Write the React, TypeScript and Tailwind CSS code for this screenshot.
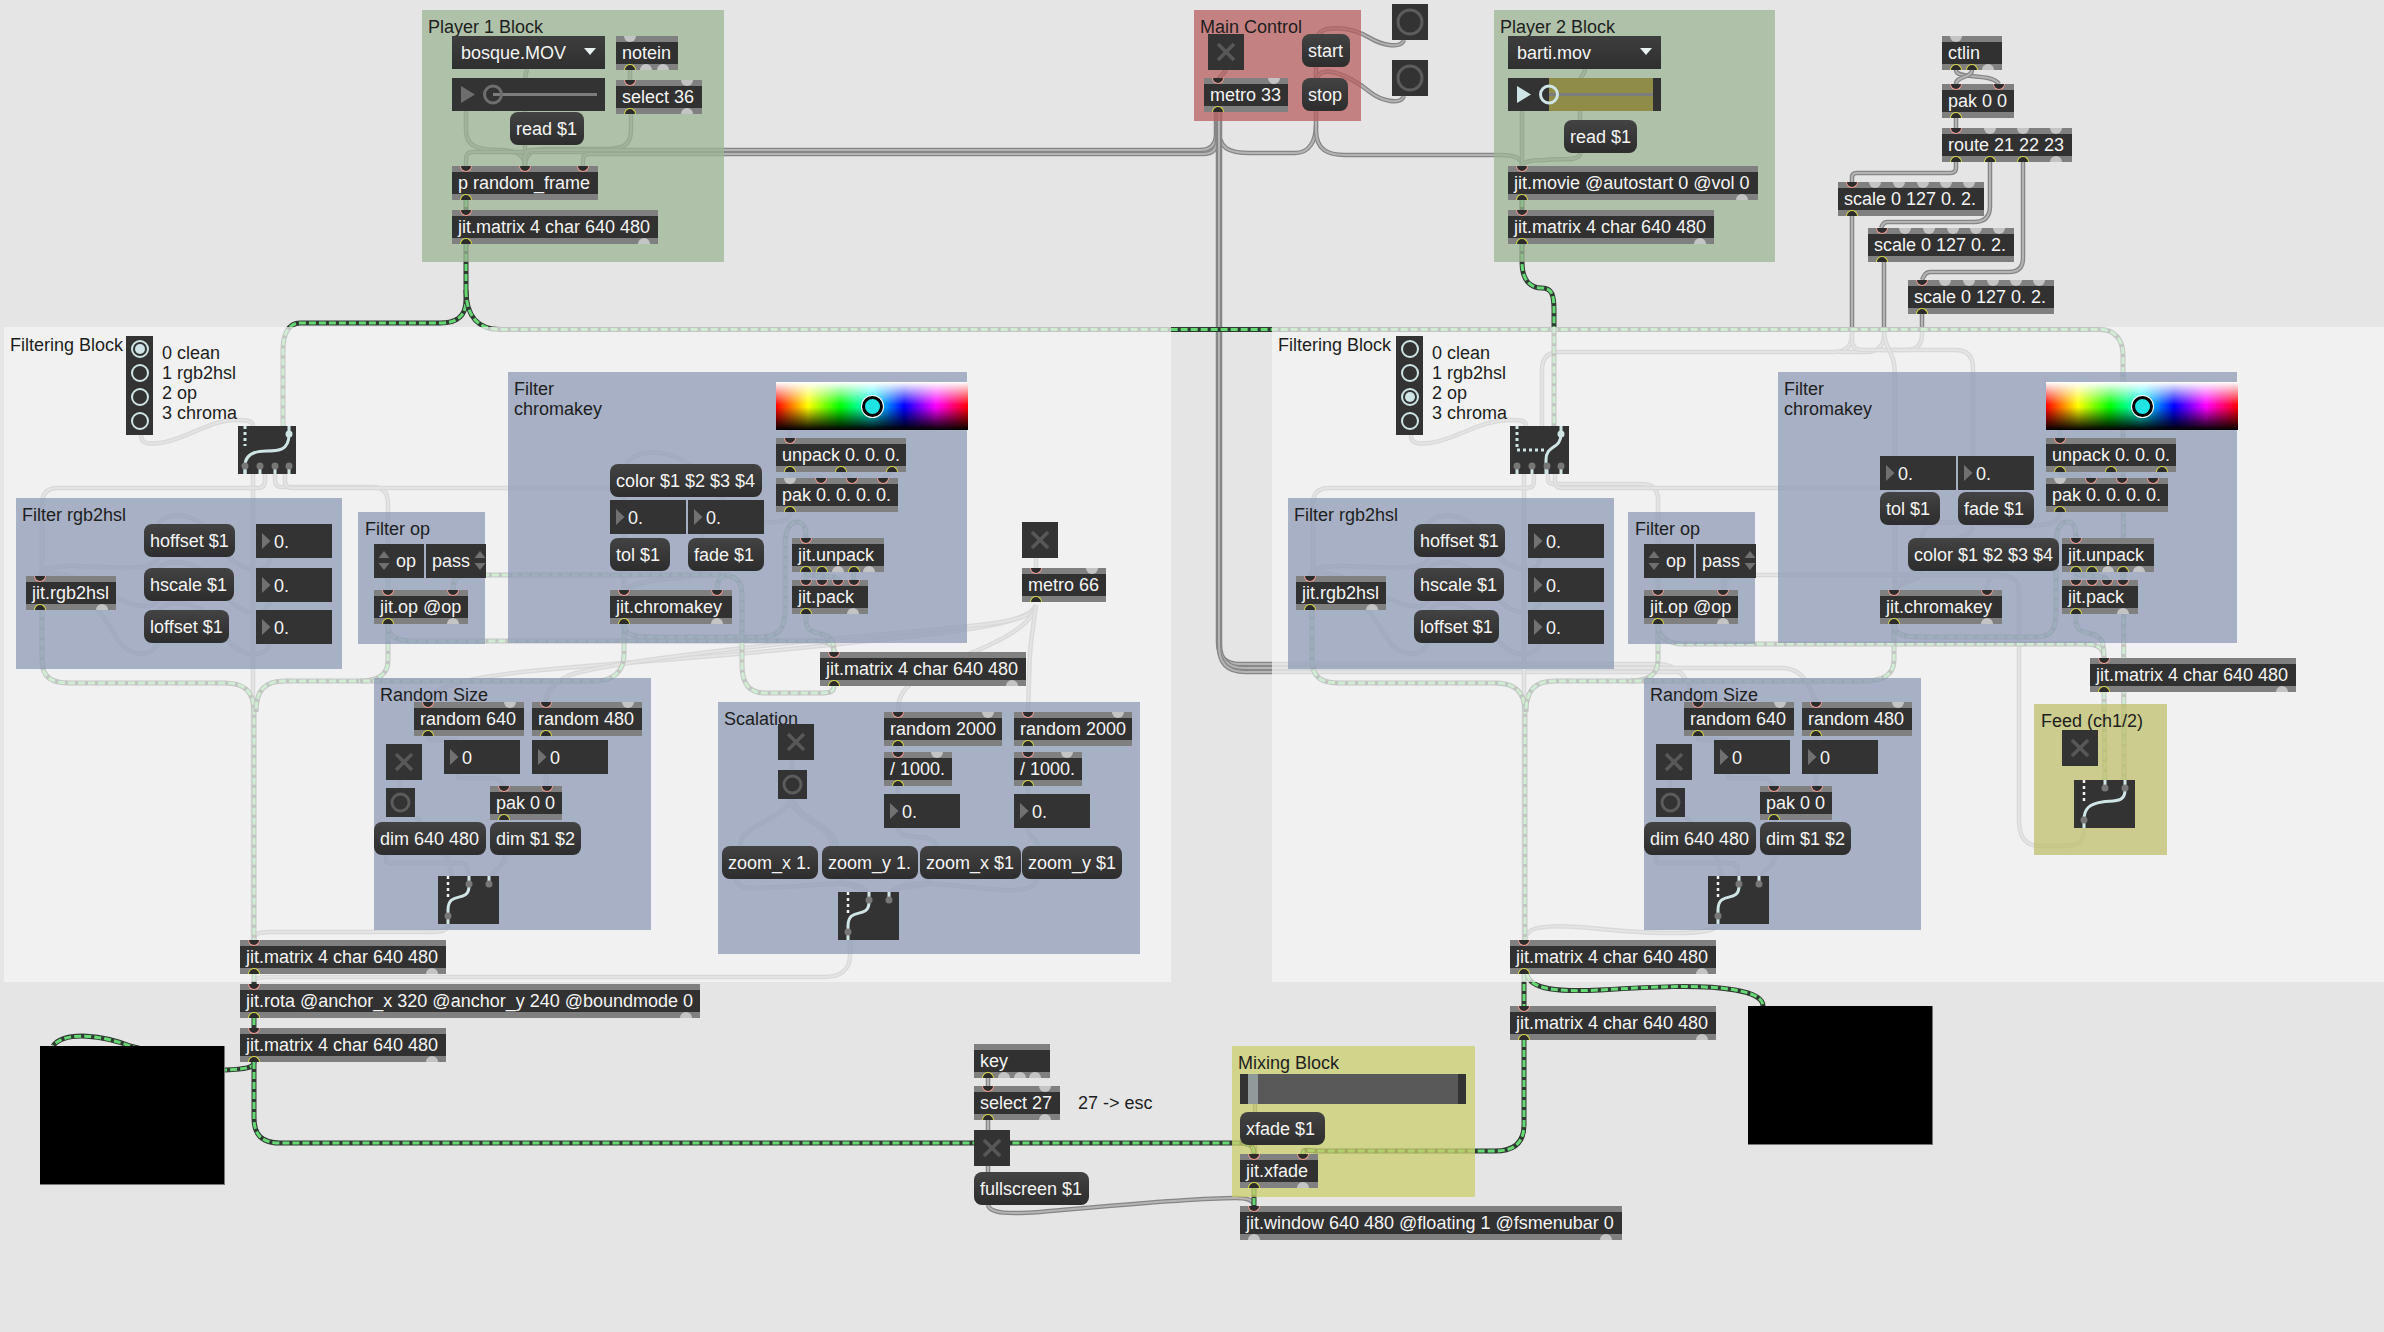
import React from "react";

type Pt = [number, number];
const P = (pts: Pt[], r = 14): string => {
  let d = `M${pts[0][0]} ${pts[0][1]}`;
  for (let i = 1; i < pts.length - 1; i++) {
    const [ax, ay] = pts[i - 1];
    const [bx, by] = pts[i];
    const [cx, cy] = pts[i + 1];
    const d1 = Math.hypot(bx - ax, by - ay) || 1;
    const d2 = Math.hypot(cx - bx, cy - by) || 1;
    const q = Math.min(r, d1 / 2, d2 / 2);
    d += ` L${bx - ((bx - ax) / d1) * q} ${by - ((by - ay) / d1) * q} Q${bx} ${by} ${bx + ((cx - bx) / d2) * q} ${by + ((cy - by) / d2) * q}`;
  }
  const l = pts[pts.length - 1];
  return d + ` L${l[0]} ${l[1]}`;
};

/* wires that exist identically in both Filtering Blocks (right one is +1270) */
const sharedGray: string[] = [
  "M270 558 C270 578 232 572 215 540 C203 515 170 508 158 524",
  "M158 557 C158 574 100 566 72 566 C50 566 40 570 40 576",
  "M270 602 C262 622 235 612 222 590 C205 565 175 555 158 568",
  "M158 601 C150 612 130 604 112 596 C85 582 55 566 40 576",
  "M270 644 C262 662 235 655 225 635 C210 605 175 595 158 610",
  "M158 643 C150 660 128 655 118 640 C105 620 90 585 40 576",
  P([[428, 736], [428, 740], [458, 740]], 3),
  P([[458, 774], [458, 778], [498, 778], [504, 786]], 6),
  P([[546, 736], [546, 786]]),
  P([[400, 780], [400, 788]]),
  "M416 817 C430 835 452 850 452 885",
  P([[504, 820], [504, 822]]),
  P([[386, 855], [386, 863], [468, 863], [468, 885]], 8),
  "M505 855 C505 870 489 868 489 885",
  P([[388, 578], [388, 590]]),
  P([[453, 578], [453, 590]]),
];

const gray: string[] = [
  // Player 1
  P([[630, 70], [630, 80]]),
  P([[527, 69], [525, 78], [525, 166]], 4),
  "M631 114 L631 130 C631 146 622 149 605 149 L545 149 C532 149 525 154 525 166",
  "M466 111 L466 130 C466 148 480 150 500 150 C515 150 525 155 525 166",
  P([[1218, 112], [1218, 152], [480, 152], [466, 152], [466, 166]], 16),
  P([[1216, 112], [1216, 150], [540, 150], [525, 150], [525, 166]], 16),
  P([[1217, 112], [1217, 154], [595, 154], [583, 154], [583, 166]], 14),
  // Main control
  P([[1226, 70], [1218, 80]], 2),
  "M1218 125 C1218 150 1230 153 1250 153 L1295 153 C1310 153 1316 140 1316 125",
  P([[1316, 67], [1316, 78]]),
  "M1316 111 L1316 130 C1316 150 1328 155 1345 155 L1500 155 C1515 155 1522 158 1522 166",
  "M1404 40 C1400 50 1380 44 1370 38 C1350 26 1320 24 1317 38",
  "M1404 96 C1400 106 1380 100 1370 92 C1350 76 1320 62 1317 80",
  P([[1218, 112], [1218, 664], [1678, 664], [1698, 702]], 22),
  P([[1220, 112], [1220, 668], [1800, 668], [1816, 702]], 24),
  P([[1219, 112], [1219, 672], [1680, 672]], 26),
  // Player 2
  P([[1522, 111], [1522, 166]]),
  "M1585 69 C1585 76 1580 74 1580 82 L1580 120",
  "M1580 153 C1580 162 1560 158 1545 160 C1530 160 1522 162 1522 166",
  // ctlin
  "M1956 70 C1956 80 1990 72 1999 84",
  "M1972 70 C1972 78 1956 76 1956 84",
  P([[1956, 118], [1956, 128]]),
  P([[1956, 162], [1956, 173], [1852, 173], [1852, 182]], 8),
  P([[1990, 162], [1990, 222], [1884, 222], [1881, 228]], 16),
  P([[2023, 162], [2023, 272], [1926, 272], [1922, 280]], 14),
  // scale outlets into right block
  P([[1852, 216], [1852, 352], [1542, 352], [1542, 426]], 18),
  P([[1884, 262], [1884, 352], [1840, 352]], 18),
  P([[1922, 314], [1922, 350], [1880, 350]], 16),
  P([[1852, 330], [1852, 350], [1973, 350], [1973, 492]], 18),
  "M1884 330 C1884 350 1895 350 1895 375 L1895 456",
  // Left filtering
  "M141 435 C141 445 150 444 160 443 C185 440 210 420 235 420 C245 420 253 420 253 426",
  P([[253, 474], [253, 940]]),
  P([[265, 474], [265, 488], [42, 488], [42, 576]], 16),
  P([[275, 474], [275, 487], [388, 487], [388, 590]], 16),
  P([[285, 474], [285, 488], [624, 488], [624, 590]], 10),
  P([[624, 497], [624, 500]]),
  P([[624, 571], [624, 590]]),
  P([[702, 534], [702, 538]]),
  "M702 571 C700 582 650 574 624 590",
  "M790 512 C790 524 775 522 765 522 C745 520 725 505 700 475 C680 450 640 445 626 464",
  P([[790, 430], [790, 438]]),
  "M790 472 C790 478 821 472 821 478",
  P([[841, 472], [852, 478]], 2),
  P([[892, 472], [883, 478]], 2),
  P([[1036, 558], [1036, 568]]),
  "M1036 605 C1030 625 960 632 800 648 C650 663 520 668 470 680 C440 688 428 692 428 702",
  "M1036 605 C1030 625 980 625 800 642 C700 652 600 665 570 675 C555 682 546 690 546 702",
  "M1036 605 C1030 640 940 660 915 680 C900 692 898 700 898 712",
  P([[1036, 605], [1030, 650], [1028, 712]], 10),
  // Scalation
  P([[792, 760], [792, 770]]),
  "M792 799 C780 822 740 825 740 846",
  "M792 799 C800 820 835 825 837 846",
  "M790 799 C795 820 828 822 832 846",
  P([[898, 746], [898, 752]]),
  P([[898, 786], [898, 794]]),
  "M898 828 C898 842 936 832 936 846",
  P([[1028, 746], [1028, 752]]),
  P([[1028, 786], [1028, 794]]),
  "M1028 828 C1028 838 1038 838 1038 846",
  "M736 879 C736 892 760 888 800 886 C835 884 869 878 869 900",
  "M840 879 C845 888 869 885 869 900",
  "M930 879 C930 892 889 880 889 900",
  "M1036 879 C1036 895 1000 890 960 886 C925 882 889 880 889 900",
  "M448 924 C448 932 440 932 425 932 L270 932 C258 932 254 934 254 940",
  "M850 940 L850 955 C850 970 840 977 825 977 L270 977 C258 977 254 978 254 984",
  // Right filtering
  "M1411 435 C1411 445 1420 444 1430 443 C1455 440 1480 420 1510 420 C1520 420 1526 420 1526 426",
  P([[1524, 474], [1524, 940]]),
  P([[1534, 474], [1534, 488], [1313, 488], [1313, 576]], 16),
  P([[1548, 474], [1548, 484], [1658, 484], [1658, 590]], 16),
  P([[1555, 474], [1555, 488], [1895, 488], [1895, 590]], 10),
  P([[1973, 490], [1973, 492]]),
  "M2060 512 C2060 524 2045 526 2020 526 L1945 522 C1928 522 1922 530 1922 538",
  "M1922 571 C1922 582 1900 580 1895 590",
  "M1973 525 C1973 542 1940 535 1925 555 C1915 575 1900 578 1895 590",
  P([[2060, 430], [2060, 438]]),
  "M2060 472 C2060 478 2090 472 2090 478",
  P([[2110, 472], [2121, 478]], 2),
  P([[2162, 472], [2153, 478]], 2),
  "M2084 828 C2084 846 2075 846 2060 846 L2040 846 C2026 846 2019 838 2019 820 L2019 592 C2019 580 2012 575 1998 575 L1740 575 C1728 575 1724 578 1724 590",
  "M1987 590 C1987 578 1992 575 2000 575",
  "M1527 935 C1530 925 1560 925 1590 928 C1640 933 1690 935 1710 930 C1716 928 1718 926 1718 924",
  // Bottom
  P([[988, 1078], [988, 1086]]),
  P([[988, 1120], [988, 1130]]),
  P([[988, 1166], [988, 1172]]),
  P([[1255, 1104], [1255, 1112]]),
  P([[1255, 1145], [1255, 1154]]),
  "M988 1205 C990 1214 1010 1214 1040 1212 C1110 1206 1190 1198 1235 1198 C1248 1198 1254 1200 1254 1206",
];

const jit: string[] = [
  P([[466, 200], [466, 210]]),
  "M466 244 L466 300 C466 318 455 323 440 323 L300 323 C288 323 283 335 283 350 L283 426",
  "M466 290 C466 318 480 329.5 500 329.5 L2100 329.5 C2115 329.5 2123 340 2123 355 L2124 790",
  "M42 610 L42 660 C42 678 52 683 70 683 L225 683 C245 683 254 692 254 712 L254 940",
  "M388 624 L388 660 C388 675 378 681 360 681 L285 681 C265 681 256 690 256 712",
  "M624 624 L624 655 C624 672 612 681 595 681 L360 681",
  "M388 624 C388 638 398 641 415 641 L815 641 C830 641 834 645 834 652",
  "M834 686 C834 692 830 693 820 693 L765 693 C750 693 742 685 742 665 L742 595 C742 580 735 575 720 575 L470 575 C458 575 453 578 453 590",
  "M717 590 C717 578 722 575 730 575",
  "M624 624 C624 634 632 637 650 637 L760 637 C778 637 785 630 785 610 L785 545 C785 530 790 522 797 522 C804 522 806 528 806 538",
  "M806 614 L806 620 C806 632 815 632 822 634 C832 637 834 642 834 652",
  P([[806, 572], [806, 580]]),
  P([[822, 572], [822, 580]]),
  P([[854, 572], [854, 580]]),
  "M806 572 C806 578 838 574 838 580",
  P([[254, 974], [254, 984]]),
  P([[254, 1018], [254, 1028]]),
  "M254 1062 C254 1068 245 1069 225 1070 L130 1046 C105 1036 65 1030 53 1046",
  "M254 1062 L254 1118 C254 1135 262 1143 280 1143 L1238 1143 C1250 1143 1254 1146 1254 1154",
  // Right
  P([[1522, 200], [1522, 210]]),
  "M1522 244 L1522 262 C1522 282 1532 288 1542 288 C1552 288 1554 295 1554 310 L1554 426",
  "M1312 610 L1312 660 C1312 678 1322 683 1340 683 L1495 683 C1515 683 1525 692 1525 712 L1525 940",
  "M1658 624 L1658 660 C1658 675 1648 681 1630 681 L1555 681 C1535 681 1526 690 1526 712",
  "M1894 624 L1894 660 C1894 675 1882 681 1865 681 L1630 681",
  "M1658 624 C1658 638 1668 644 1685 644 L2085 644 C2100 644 2104 650 2104 658",
  "M1894 624 C1894 634 1902 637 1920 637 L2035 637 C2052 637 2056 630 2056 610 L2056 545 C2056 530 2060 522 2067 522 C2074 522 2076 528 2076 538",
  "M2076 614 L2076 620 C2076 632 2085 632 2092 634 C2102 637 2104 642 2104 658",
  P([[2076, 572], [2076, 580]]),
  P([[2092, 572], [2092, 580]]),
  P([[2123, 572], [2123, 580]]),
  "M2076 572 C2076 578 2107 574 2107 580",
  P([[2104, 692], [2105, 790]]),
  P([[1524, 974], [1524, 1006]]),
  "M1527 974 C1530 990 1560 992 1600 990 C1650 987 1700 984 1735 990 C1758 994 1763 1000 1763 1006",
  "M1524 1040 L1524 1125 C1524 1142 1515 1151 1495 1151 L1320 1151 C1306 1151 1303 1148 1303 1154",
  P([[1254, 1188], [1254, 1206]]),
];

const GrayWire = ({ d }: { d: string }) => (
  <>
    <path d={d} fill="none" stroke="#868686" strokeWidth="4.5" />
    <path d={d} fill="none" stroke="#b4b4b4" strokeWidth="2" />
  </>
);
const JitWire = ({ d }: { d: string }) => (
  <>
    <path d={d} fill="none" stroke="#303a32" strokeWidth="5" />
    <path d={d} fill="none" stroke="#66d874" strokeWidth="3" strokeDasharray="7 3" />
  </>
);

const Wires = () => (
  <svg className="absolute left-0 top-0" width="2384" height="1332">
    <g>{sharedGray.map((d, i) => <GrayWire key={i} d={d} />)}</g>
    <g transform="translate(1270 0)">{sharedGray.map((d, i) => <GrayWire key={i} d={d} />)}</g>
    {gray.map((d, i) => <GrayWire key={i} d={d} />)}
    {jit.map((d, i) => <JitWire key={i} d={d} />)}
  </svg>
);

type Box = { x: number; y: number; w: number; h: number };
const box = (b: Box): React.CSSProperties => ({ left: b.x, top: b.y, width: b.w, height: b.h });

const Region = ({ c, ...b }: Box & { c: string }) => <div className={`absolute ${c}`} style={box(b)} />;

const Label = ({ x, y, children }: { x: number; y: number; children: React.ReactNode }) => (
  <div className="absolute whitespace-pre text-[18px] leading-[20px] text-[#1e1e1e]" style={{ left: x, top: y - 10 }}>
    {children}
  </div>
);

const Port = ({ at, kind }: { at: number; kind: "a" | "b" | "c" | "d" }) => {
  const cls =
    kind === "a"
      ? "top-0 rounded-b-full bg-[#2c2c2c] border-[1.5px] border-t-0 border-[#f29c90]"
      : kind === "b"
      ? "top-0 rounded-b-full bg-[#c4c4c4]"
      : kind === "c"
      ? "bottom-0 rounded-t-full bg-[#2c2c2c] border-[1.5px] border-b-0 border-[#dcdc46]"
      : "bottom-0 rounded-t-full bg-[#c4c4c4]";
  return <div className={`absolute h-[6px] w-[12px] ${cls}`} style={{ left: at - 6 }} />;
};

type ObjP = { x: number; y: number; w: number; t?: string; a?: number[]; b?: number[]; c?: number[]; d?: number[] };
const Obj = ({ x, y, w, t, a = [], b = [], c = [], d = [] }: ObjP) => (
  <div className="absolute flex h-[34px] items-stretch bg-[#808080] py-[6px]" style={{ left: x, top: y, width: w }}>
    <div className="flex flex-1 items-center overflow-visible whitespace-pre bg-[#313131] pl-[6px] text-[18px] leading-none text-[#f4f4f4]">{t}</div>
    {a.map((o) => <Port key={"a" + o} at={o} kind="a" />)}
    {b.map((o) => <Port key={"b" + o} at={o} kind="b" />)}
    {c.map((o) => <Port key={"c" + o} at={o} kind="c" />)}
    {d.map((o) => <Port key={"d" + o} at={o} kind="d" />)}
  </div>
);

const Msg = ({ x, y, w, t }: { x: number; y: number; w: number; t: string }) => (
  <div
    className="absolute flex h-[33px] items-center whitespace-pre rounded-[8px] bg-gradient-to-b from-[#434343] to-[#2d2d2d] pl-[6px] pt-[1px] text-[18px] leading-none text-[#f4f4f4]"
    style={{ left: x, top: y, width: w }}
  >
    {t}
  </div>
);

const Num = ({ x, y, w, t }: { x: number; y: number; w: number; t: string }) => (
  <div className="absolute flex h-[34px] items-center whitespace-pre bg-[#333333] pl-[18px] pt-[1px] text-[18px] leading-none text-[#f4f4f4]" style={{ left: x, top: y, width: w }}>
    <svg className="absolute left-[6px] top-[9px]" width="9" height="16">
      <path d="M0 0 L8.5 8 L0 16 Z" fill="#717171" />
    </svg>
    {t}
  </div>
);

const Toggle = ({ x, y, w = 36 }: { x: number; y: number; w?: number }) => (
  <div className="absolute flex h-[36px] items-center justify-center bg-[#333333]" style={{ left: x, top: y, width: w }}>
    <svg width="20" height="20">
      <path d="M2 2 L18 18 M18 2 L2 18" stroke="#585858" strokeWidth="3.5" />
    </svg>
  </div>
);

const Btn = ({ x, y, s }: { x: number; y: number; s: number }) => (
  <div className="absolute flex items-center justify-center bg-[#333333]" style={{ left: x, top: y, width: s, height: s === 36 ? 36 : 29 }}>
    <svg width={s - 6} height={s - 6}>
      <circle cx={(s - 6) / 2} cy={(s - 6) / 2} r={(s - 6) / 2 - 3} fill="none" stroke="#5c5c5c" strokeWidth="3" />
    </svg>
  </div>
);

const Menu = ({ x, y, w, t }: { x: number; y: number; w: number; t: string }) => (
  <div className="absolute flex h-[33px] items-center whitespace-pre bg-gradient-to-b from-[#3e3e3e] to-[#2f2f2f] pl-[9px] text-[18px] leading-none text-[#f4f4f4]" style={{ left: x, top: y, width: w }}>
    {t}
    <svg className="absolute right-[8px] top-[12px]" width="14" height="8">
      <path d="M1 0 L13 0 L7 7 Z" fill="#e8f0f0" />
    </svg>
  </div>
);

const Radio = ({ x, sel }: { x: number; sel: number }) => (
  <div className="absolute" style={{ left: x, top: 336 }}>
    <div className="relative flex h-[99px] w-[27px] flex-col items-center gap-[6px] bg-[#333333] pt-[4px]">
      {[0, 1, 2, 3].map((i) => (
        <div key={i} className="flex h-[18px] w-[18px] items-center justify-center rounded-full border-2 border-[#cfe5e5]">
          {i === sel && <div className="h-[10px] w-[10px] rounded-full bg-[#cfe5e5]" />}
        </div>
      ))}
    </div>
  </div>
);

const Legend = ({ x }: { x: number }) => (
  <div className="absolute text-[18px] leading-[20px] text-[#1e1e1e]" style={{ left: x, top: 343 }}>
    <div>0 clean</div>
    <div>1 rgb2hsl</div>
    <div>2 op</div>
    <div>3 chroma</div>
  </div>
);

const Spin = ({ x, w, t, right }: { x: number; w: number; t: string; right?: boolean }) => (
  <div className={`absolute flex h-[34px] items-center bg-[#333333] text-[18px] leading-none text-[#f4f4f4] ${right ? "pl-[6px]" : "pl-[22px]"}`} style={{ left: x, top: 544, width: w }}>
    {t}
    <svg className={`absolute top-[6px] ${right ? "right-[0px]" : "left-[4px]"}`} width="12" height="22">
      <path d="M6 1 L11.5 8 L0.5 8 Z M0.5 13 L11.5 13 L6 20 Z" fill="#707070" />
    </svg>
  </div>
);

const Swatch = ({ x }: { x: number }) => {
  return (
    <div className="absolute h-[48px] w-[192px] bg-[linear-gradient(to_right,#ff0000,#ffff00,#00ff00,#00ffff,#0000ff,#ff00ff,#ff0000)]" style={{ left: x, top: 382 }}>
      <div className="absolute inset-0 bg-[linear-gradient(to_bottom,#ffffff,rgba(255,255,255,0)_48%,rgba(0,0,0,0)_52%,#000000)]" />
      <div className="absolute left-[86px] top-[14px] h-[21px] w-[21px] rounded-full border-[3px] border-black bg-[#1fe4e4] shadow-[0_0_0_1px_#ffffff]" />
    </div>
  );
};

const BigSwitch = ({ x, w, sel }: { x: number; w: number; sel: number }) => {
  const outs = [7, 22, 37, 51];
  return (
    <svg className="absolute bg-[#333333]" style={{ left: x, top: 426 }} width={w} height="48">
      {sel === 0 ? (
        <>
          <path d="M7 0 V20" stroke="#cfe5e5" strokeWidth="3" strokeDasharray="3 3" fill="none" />
          <path d="M51 0 V8 C51 25 40 25 28 25 C14 25 7 30 7 40 V48" stroke="#cfe5e5" strokeWidth="3" fill="none" />
        </>
      ) : (
        <>
          <path d="M7 0 V24 H37" stroke="#cfe5e5" strokeWidth="3" strokeDasharray="3 3" fill="none" />
          <path d="M51 0 V8 C51 24 36 18 36 34 V48" stroke="#cfe5e5" strokeWidth="3" fill="none" />
        </>
      )}
      {outs.map((o) => (
        <g key={o}>
          <path d={`M${o} 40 V48`} stroke="#cfe5e5" strokeWidth="3" />
          <circle cx={o} cy="40" r="3.5" fill="#777777" />
        </g>
      ))}
      <circle cx="51" cy="8" r="3.5" fill="#cfe5e5" />
    </svg>
  );
};

const Gate = ({ x, y, sel = 0 }: { x: number; y: number; sel?: number }) => {
  const from = sel === 0 ? 31 : 51;
  return (
    <svg className="absolute bg-[#333333]" style={{ left: x, top: y }} width="61" height="48">
      <path d="M10 0 V24" stroke="#f2f2f2" strokeWidth="2.5" strokeDasharray="3 3" fill="none" />
      <path d={sel === 0 ? "M31 0 V10 C31 28 10 14 10 34 V48" : "M51 0 V10 C51 24 38 20 28 22 C16 24 10 28 10 40 V48"} stroke="#cfe5e5" strokeWidth="3" fill="none" />
      <path d={sel === 0 ? "M51 0 V8" : "M31 0 V8"} stroke="#cfe5e5" strokeWidth="3" fill="none" />
      <circle cx={from} cy="8" r="3.5" fill="#777777" />
      <circle cx={sel === 0 ? 51 : 31} cy="8" r="3.5" fill="#777777" />
      <circle cx="10" cy="40" r="3.5" fill="#777777" />
    </svg>
  );
};

const Bar = ({ x, on }: { x: number; on?: boolean }) => (
  <svg className="absolute" style={{ left: x, top: 78 }} width="153" height="33">
    <rect width="153" height="33" fill="#333333" />
    {on && <rect x="41" width="104" height="33" fill="#8f8c4a" />}
    <path d="M9 8 L23 16.5 L9 25 Z" fill={on ? "#cfe5e5" : "#6e6e6e"} />
    <path d="M41 16.5 H145" stroke="#7c7c7c" strokeWidth="3" />
    <circle cx="41" cy="16.5" r="8.5" fill="none" stroke={on ? "#cfe5e5" : "#6e6e6e"} strokeWidth="3" />
  </svg>
);

/* objects that repeat at +1270 in the right-hand Filtering Block */
const Shared = ({ dx }: { dx: number }) => (
  <>
    <Obj x={26 + dx} y={576} w={90} t="jit.rgb2hsl" a={[14]} c={[14]} d={[76]} />
    <Msg x={144 + dx} y={524} w={91} t="hoffset $1" />
    <Msg x={144 + dx} y={568} w={90} t="hscale $1" />
    <Msg x={144 + dx} y={610} w={85} t="loffset $1" />
    <Num x={256 + dx + (dx ? 2 : 0)} y={524} w={76} t="0." />
    <Num x={256 + dx + (dx ? 2 : 0)} y={568} w={76} t="0." />
    <Num x={256 + dx + (dx ? 2 : 0)} y={610} w={76} t="0." />
    <Spin x={374 + dx} w={50} t="op" />
    <Spin x={426 + dx} w={60} t="pass" right />
    <Obj x={374 + dx} y={590} w={94} t="jit.op @op" a={[14, 79]} c={[14]} d={[79]} />
    <Obj x={414 + dx} y={702} w={110} t="random 640" a={[14]} b={[96]} c={[14]} />
    <Obj x={532 + dx} y={702} w={110} t="random 480" a={[14]} b={[96]} c={[14]} />
    <Toggle x={386 + dx} y={744} />
    <Num x={444 + dx} y={740} w={76} t="0" />
    <Num x={532 + dx} y={740} w={76} t="0" />
    <Btn x={386 + dx} y={788} s={29} />
    <Obj x={490 + dx} y={786} w={72} t="pak 0 0" a={[14, 57]} c={[14]} />
    <Msg x={374 + dx} y={822} w={112} t="dim 640 480" />
    <Msg x={490 + dx} y={822} w={91} t="dim $1 $2" />
    <Gate x={438 + dx} y={876} />
  </>
);

const Panels = () => (
  <>
    <Region x={4} y={327} w={1167} h={655} c="bg-[rgba(244,244,244,0.75)]" />
    <Region x={1272} y={327} w={1112} h={655} c="bg-[rgba(244,244,244,0.75)]" />
    <Region x={422} y={10} w={302} h={252} c="bg-[rgba(156,180,148,0.75)]" />
    <Region x={1194} y={10} w={167} h={111} c="bg-[rgba(184,95,95,0.75)]" />
    <Region x={1494} y={10} w={281} h={252} c="bg-[rgba(156,180,148,0.75)]" />
    <Region x={16} y={498} w={326} h={171} c="bg-[rgba(141,153,180,0.75)]" />
    <Region x={358} y={512} w={127} h={132} c="bg-[rgba(141,153,180,0.75)]" />
    <Region x={508} y={372} w={459} h={271} c="bg-[rgba(141,153,180,0.75)]" />
    <Region x={374} y={678} w={277} h={252} c="bg-[rgba(141,153,180,0.75)]" />
    <Region x={718} y={702} w={422} h={252} c="bg-[rgba(141,153,180,0.75)]" />
    <Region x={1288} y={498} w={326} h={171} c="bg-[rgba(141,153,180,0.75)]" />
    <Region x={1628} y={512} w={127} h={132} c="bg-[rgba(141,153,180,0.75)]" />
    <Region x={1778} y={372} w={459} h={271} c="bg-[rgba(141,153,180,0.75)]" />
    <Region x={1644} y={678} w={277} h={252} c="bg-[rgba(141,153,180,0.75)]" />
    <Region x={2034} y={704} w={133} h={151} c="bg-[rgba(190,191,107,0.75)]" />
    <Region x={1232} y={1046} w={243} h={151} c="bg-[rgba(201,205,108,0.75)]" />
  </>
);

const MATRIX = "jit.matrix 4 char 640 480";

export default function App() {
  return (
    <div className="relative h-[1332px] w-[2384px] overflow-hidden bg-[#e5e5e5] font-['Liberation_Sans',Arial,sans-serif]">
      <Wires />
      <Panels />

      <Label x={428} y={27}>Player 1 Block</Label>
      <Menu x={452} y={36} w={153} t="bosque.MOV" />
      <Obj x={616} y={36} w={62} t="notein" b={[14]} c={[14]} d={[30, 47]} />
      <Bar x={452} />
      <Obj x={616} y={80} w={86} t="select 36" a={[14]} b={[71]} c={[14]} d={[71]} />
      <Msg x={510} y={112} w={74} t="read $1" />
      <Obj x={452} y={166} w={146} t="p random_frame" a={[14, 73, 131]} c={[14]} />
      <Obj x={452} y={210} w={206} t={MATRIX} a={[14]} c={[14]} d={[192]} />

      <Label x={1200} y={27}>Main Control</Label>
      <Toggle x={1208} y={34} />
      <Obj x={1204} y={78} w={84} t="metro 33" a={[14]} b={[70]} c={[14]} />
      <Msg x={1302} y={34} w={48} t="start" />
      <Msg x={1302} y={78} w={46} t="stop" />
      <Btn x={1392} y={4} s={36} />
      <Btn x={1392} y={60} s={36} />

      <Label x={1500} y={27}>Player 2 Block</Label>
      <Menu x={1508} y={36} w={153} t="barti.mov" />
      <Bar x={1508} on />
      <Msg x={1564} y={120} w={73} t="read $1" />
      <Obj x={1508} y={166} w={250} t="jit.movie @autostart 0 @vol 0" a={[14]} c={[14]} d={[234]} />
      <Obj x={1508} y={210} w={206} t={MATRIX} a={[14]} c={[14]} d={[192]} />

      <Obj x={1942} y={36} w={60} t="ctlin" b={[14]} c={[14, 30]} d={[46]} />
      <Obj x={1942} y={84} w={72} t="pak 0 0" a={[14, 57]} c={[14]} />
      <Obj x={1942} y={128} w={130} t="route 21 22 23" a={[14]} b={[48, 81, 114]} c={[14, 48, 81]} d={[114]} />
      <Obj x={1838} y={182} w={146} t="scale 0 127 0. 2." a={[14]} b={[37, 61, 85, 108, 131]} c={[14]} />
      <Obj x={1868} y={228} w={146} t="scale 0 127 0. 2." a={[14]} b={[37, 61, 85, 108, 131]} c={[14]} />
      <Obj x={1908} y={280} w={146} t="scale 0 127 0. 2." a={[14]} b={[37, 61, 85, 108, 131]} c={[14]} />

      {/* Left filtering block */}
      <Label x={10} y={345}>Filtering Block</Label>
      <Radio x={126} sel={0} />
      <Legend x={162} />
      <BigSwitch x={238} w={58} sel={0} />
      <Label x={22} y={515}>Filter rgb2hsl</Label>
      <Label x={365} y={529}>Filter op</Label>
      <Label x={514} y={389}>Filter</Label>
      <Label x={514} y={409}>chromakey</Label>
      <Label x={380} y={695}>Random Size</Label>
      <Shared dx={0} />
      <Swatch x={776} />
      <Obj x={776} y={438} w={130} t="unpack 0. 0. 0." a={[14]} c={[14, 65, 116]} />
      <Obj x={776} y={478} w={122} t="pak 0. 0. 0. 0." b={[14]} a={[45, 76, 107]} c={[14]} />
      <Msg x={610} y={464} w={152} t="color $1 $2 $3 $4" />
      <Num x={610} y={500} w={76} t="0." />
      <Num x={688} y={500} w={76} t="0." />
      <Msg x={610} y={538} w={60} t="tol $1" />
      <Msg x={688} y={538} w={76} t="fade $1" />
      <Obj x={610} y={590} w={122} t="jit.chromakey" a={[14, 107]} c={[14]} d={[107]} />
      <Obj x={792} y={538} w={92} t="jit.unpack" a={[14]} c={[14, 30, 62]} d={[46, 77]} />
      <Obj x={792} y={580} w={76} t="jit.pack" a={[14, 30, 46, 62]} c={[14]} d={[61]} />
      <Toggle x={1022} y={522} />
      <Obj x={1022} y={568} w={84} t="metro 66" a={[14]} b={[70]} c={[14]} />
      <Obj x={820} y={652} w={206} t={MATRIX} a={[14]} c={[14]} d={[192]} />

      {/* Scalation */}
      <Label x={724} y={719}>Scalation</Label>
      <Toggle x={778} y={724} />
      <Btn x={778} y={770} s={29} />
      <Obj x={884} y={712} w={118} t="random 2000" a={[14]} b={[104]} c={[14]} />
      <Obj x={1014} y={712} w={118} t="random 2000" a={[14]} b={[104]} c={[14]} />
      <Obj x={884} y={752} w={68} t="/ 1000." a={[14]} b={[53]} c={[14]} />
      <Obj x={1014} y={752} w={68} t="/ 1000." a={[14]} b={[53]} c={[14]} />
      <Num x={884} y={794} w={76} t="0." />
      <Num x={1014} y={794} w={76} t="0." />
      <Msg x={722} y={846} w={96} t="zoom_x 1." />
      <Msg x={822} y={846} w={96} t="zoom_y 1." />
      <Msg x={920} y={846} w={101} t="zoom_x $1" />
      <Msg x={1022} y={846} w={100} t="zoom_y $1" />
      <Gate x={838} y={892} />

      <Obj x={240} y={940} w={206} t={MATRIX} a={[14]} c={[14]} d={[192]} />
      <Obj x={240} y={984} w={460} t="jit.rota @anchor_x 320 @anchor_y 240 @boundmode 0" a={[14]} c={[14]} d={[446]} />
      <Obj x={240} y={1028} w={206} t={MATRIX} a={[14]} c={[14]} d={[192]} />
      <div className="absolute left-[40px] top-[1046px] h-[139px] w-[185px] border-b border-r border-[#777777] bg-black" />

      {/* Right filtering block */}
      <Label x={1278} y={345}>Filtering Block</Label>
      <Radio x={1396} sel={2} />
      <Legend x={1432} />
      <BigSwitch x={1510} w={59} sel={2} />
      <Label x={1294} y={515}>Filter rgb2hsl</Label>
      <Label x={1635} y={529}>Filter op</Label>
      <Label x={1784} y={389}>Filter</Label>
      <Label x={1784} y={409}>chromakey</Label>
      <Label x={1650} y={695}>Random Size</Label>
      <Shared dx={1270} />
      <Swatch x={2046} />
      <Obj x={2046} y={438} w={130} t="unpack 0. 0. 0." a={[14]} c={[14, 65, 116]} />
      <Obj x={2046} y={478} w={122} t="pak 0. 0. 0. 0." b={[14]} a={[45, 76, 107]} c={[14]} />
      <Num x={1880} y={456} w={76} t="0." />
      <Num x={1958} y={456} w={76} t="0." />
      <Msg x={1880} y={492} w={60} t="tol $1" />
      <Msg x={1958} y={492} w={76} t="fade $1" />
      <Msg x={1908} y={538} w={151} t="color $1 $2 $3 $4" />
      <Obj x={1880} y={590} w={122} t="jit.chromakey" a={[14, 107]} c={[14]} d={[107]} />
      <Obj x={2062} y={538} w={92} t="jit.unpack" a={[14]} c={[14, 30, 61]} d={[46, 77]} />
      <Obj x={2062} y={580} w={76} t="jit.pack" a={[14, 30, 45, 61]} c={[14]} d={[61]} />
      <Obj x={2090} y={658} w={206} t={MATRIX} a={[14]} c={[14]} d={[192]} />
      <Label x={2041} y={721}>Feed (ch1/2)</Label>
      <Toggle x={2062} y={730} />
      <Gate x={2074} y={780} sel={1} />

      <Obj x={1510} y={940} w={206} t={MATRIX} a={[14]} c={[14]} d={[192]} />
      <Obj x={1510} y={1006} w={206} t={MATRIX} a={[14]} c={[14]} d={[192]} />
      <div className="absolute left-[1748px] top-[1006px] h-[139px] w-[185px] border-b border-r border-[#777777] bg-black" />

      {/* Bottom */}
      <Obj x={974} y={1044} w={76} t="key" c={[14]} d={[30, 46, 61]} />
      <Obj x={974} y={1086} w={86} t="select 27" a={[14]} b={[71]} c={[14]} d={[71]} />
      <Label x={1078} y={1103}>27 -&gt; esc</Label>
      <Toggle x={974} y={1130} />
      <Msg x={974} y={1172} w={115} t="fullscreen $1" />
      <Label x={1238} y={1063}>Mixing Block</Label>
      <div className="absolute left-[1240px] top-[1074px] flex h-[30px] w-[226px] bg-[#595959]">
        <div className="w-[8px] bg-[#333333]" />
        <div className="w-[10px] bg-[#919a9a]" />
        <div className="flex-1" />
        <div className="w-[8px] bg-[#333333]" />
      </div>
      <Msg x={1240} y={1112} w={85} t="xfade $1" />
      <Obj x={1240} y={1154} w={78} t="jit.xfade" a={[14, 63]} c={[14]} d={[63]} />
      <Obj x={1240} y={1206} w={382} t="jit.window 640 480 @floating 1 @fsmenubar 0" a={[14]} d={[14, 366]} />
    </div>
  );
}
